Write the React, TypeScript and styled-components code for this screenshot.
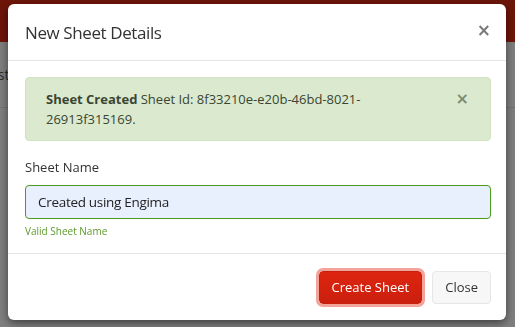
import styled, { createGlobalStyle } from 'styled-components';

const GlobalStyle = createGlobalStyle`
    html, body {
        margin: 0;
        padding: 0;
        width: 515px;
        height: 327px;
        overflow: hidden;
        font-family: "Open Sans", "Liberation Sans", sans-serif;
        font-size: 13px;
        color: #333;
    }
`

const App = () => {
    return (
        <>
            <GlobalStyle />
            <Page>
                <TopBar />
                <SubBar>
                    <SubText>List</SubText>
                </SubBar>
            </Page>
            <Backdrop />
            <Modal>
                <ModalHeader>
                    <Title>New Sheet Details</Title>
                    <CloseX color="#7a7a7a" size="17px">×</CloseX>
                </ModalHeader>
                <ModalBody>
                    <Alert>
                        <strong>Sheet Created</strong> Sheet Id: 8f33210e-e20b-46bd-8021-26913f315169.
                        <AlertClose color="#7d8c73" size="16px">×</AlertClose>
                    </Alert>
                    <Label>Sheet Name</Label>
                    <Input defaultValue="Created using Engima" />
                    <Help>Valid Sheet Name</Help>
                </ModalBody>
                <ModalFooter>
                    <Button $primary>Create Sheet</Button>
                    <Button>Close</Button>
                </ModalFooter>
            </Modal>
        </>
    );
}

export default App;

const Page = styled.div`
    width: 515px;
    height: 327px;
    background-color: #ffffff;
`

const TopBar = styled.header`
    height: 42px;
    background-color: #dc2a12;
`

const SubBar = styled.div`
    display: flex;
    align-items: center;
    height: 65px;
    border-bottom: 1px solid #e6e6e6;
`

const SubText = styled.span`
    margin-left: -13px;
    font-size: 14px;
    color: #555;
`

const Backdrop = styled.div`
    position: fixed;
    inset: 0;
    background-color: rgba(0, 0, 0, 0.5);
`

const Modal = styled.div`
    position: absolute;
    left: 8px;
    top: 4px;
    width: 498px;
    height: 316px;
    display: flex;
    flex-direction: column;
    background-color: #fff;
    border-radius: 6px;
    box-shadow: 0 3px 9px rgba(0, 0, 0, 0.5);
    overflow: hidden;
`

const ModalHeader = styled.div`
    display: flex;
    justify-content: space-between;
    align-items: center;
    height: 56px;
    padding: 0 15px 0 17px;
    border-bottom: 1px solid #e5e5e5;
`

const Title = styled.h4`
    margin: 0;
    font-size: 17px;
    font-weight: 400;
    letter-spacing: -0.4px;
    line-height: 27px;
    color: #333;
`

const CloseX = styled.span<{ color: string; size: string }>`
    font-family: "DejaVu Sans", sans-serif;
    font-weight: bold;
    font-size: ${p => p.size};
    line-height: 1;
    color: ${p => p.color};
    margin-bottom: 3px;
`

const AlertClose = styled(CloseX)`
    position: absolute;
    right: 21px;
    top: 13px;
`

const ModalBody = styled.div`
    display: flex;
    flex-direction: column;
    padding: 16px 15px 0 17px;
    height: 176px;
`

const Alert = styled.div`
    position: relative;
    padding: 11px 50px 11px 20px;
    background-color: #dbe9cf;
    border: 1px solid #d0e2c2;
    border-radius: 4px;
    line-height: 20px;
    color: #3a4631;

    strong {
        font-weight: 700;
    }
`

const Label = styled.label`
    margin-top: 16px;
    line-height: 20px;
    color: #333;
`

const Input = styled.input`
    margin-top: 8px;
    height: 34px;
    box-sizing: border-box;
    padding: 0 12px;
    border: 1px solid #4b9a1e;
    border-radius: 4px;
    background-color: #e8f0fe;
    font-family: "Open Sans", "Liberation Sans", sans-serif;
    font-size: 13.5px;
    letter-spacing: -0.3px;
    color: #222;
    outline: none;
`

const Help = styled.span`
    margin-top: 5px;
    font-size: 10px;
    line-height: 14px;
    color: #5c9a2a;
`

const ModalFooter = styled.div`
    display: flex;
    justify-content: flex-end;
    align-items: center;
    gap: 8px;
    flex: 1;
    padding: 0 15px;
    border-top: 1px solid #e5e5e5;
`

const Button = styled.button<{ $primary?: boolean }>`
    height: 33px;
    padding: 0 12px;
    border-radius: 4px;
    font-family: "Open Sans", "Liberation Sans", sans-serif;
    font-size: 13px;
    cursor: pointer;
    border: 1px solid ${p => (p.$primary ? '#c81f0d' : '#e6e6e6')};
    background: ${p => (p.$primary ? 'linear-gradient(#dd2510, #cb1f0e)' : '#f7f7f7')};
    color: ${p => (p.$primary ? '#fff' : '#333')};
    box-shadow: ${p => (p.$primary ? '0 0 0 3px #f2a39a' : 'none')};
    margin-left: ${p => (p.$primary ? '0' : '2px')};
`
